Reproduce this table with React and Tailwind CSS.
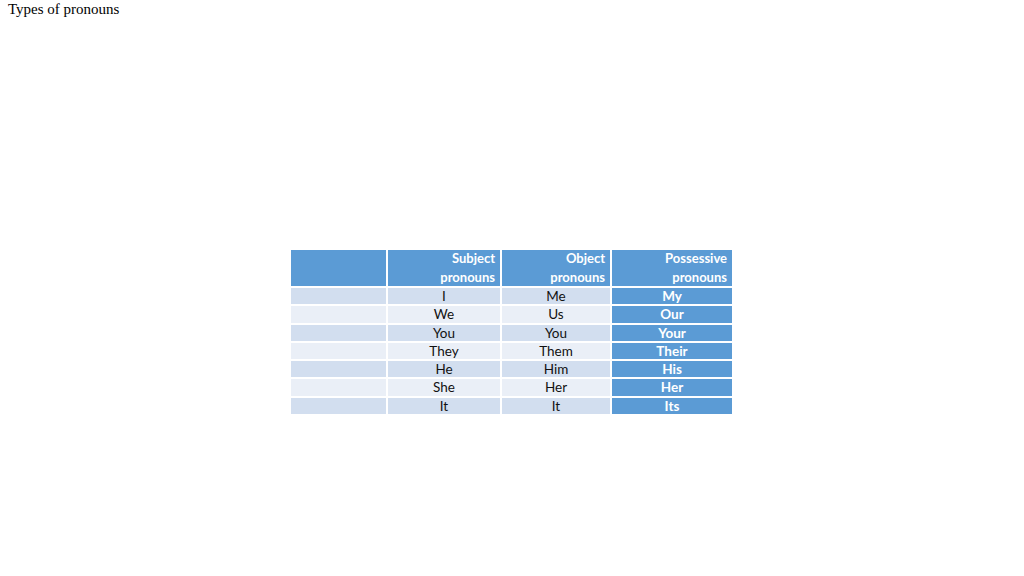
const rows = [
  ['I', 'Me', 'My'],
  ['We', 'Us', 'Our'],
  ['You', 'You', 'Your'],
  ['They', 'Them', 'Their'],
  ['He', 'Him', 'His'],
  ['She', 'Her', 'Her'],
  ['It', 'It', 'Its'],
];

const App = () => {
  return (
    <div className="w-[1024px] h-[576px] bg-white relative overflow-hidden">
      <div className="pl-[8px] pt-[0px] text-[15px] leading-[18px] text-black" style={{ fontFamily: '"Liberation Serif", serif' }}>
        Types of pronouns
      </div>
      <div className="mt-[232px] ml-[291px]" style={{ fontFamily: 'Lato, "Liberation Sans", sans-serif' }}>
        <div className="grid grid-cols-[95px_112px_108px_120px] gap-x-[2px] w-[441px] text-[13px]">
          <div className="h-[36px] bg-[#5b9bd5]"></div>
          <div className="h-[36px] bg-[#5b9bd5] text-white font-bold text-right pr-[5px] leading-[19px] flex flex-col justify-center">
            <span>Subject</span>
            <span>pronouns</span>
          </div>
          <div className="h-[36px] bg-[#5b9bd5] text-white font-bold text-right pr-[5px] leading-[19px] flex flex-col justify-center">
            <span>Object</span>
            <span>pronouns</span>
          </div>
          <div className="h-[36px] bg-[#5b9bd5] text-white font-bold text-right pr-[5px] leading-[19px] flex flex-col justify-center">
            <span>Possessive</span>
            <span>pronouns</span>
          </div>
        </div>
        <div className="mt-[2px] flex flex-col gap-y-[2px] w-[441px] text-[13.5px]">
          {rows.map((r, i) => {
            const bg = i % 2 === 0 ? 'bg-[#d2deef]' : 'bg-[#eaeff7]';
            return (
              <div key={i} className="grid grid-cols-[95px_112px_108px_120px] gap-x-[2px] h-[16.3px] leading-[16.3px]">
                <div className={bg}></div>
                <div className={`${bg} text-center text-[#111]`}>{r[0]}</div>
                <div className={`${bg} text-center text-[#111]`}>{r[1]}</div>
                <div className="bg-[#5b9bd5] text-center text-white font-bold">{r[2]}</div>
              </div>
            );
          })}
        </div>
      </div>
    </div>
  );
};

export default App;
